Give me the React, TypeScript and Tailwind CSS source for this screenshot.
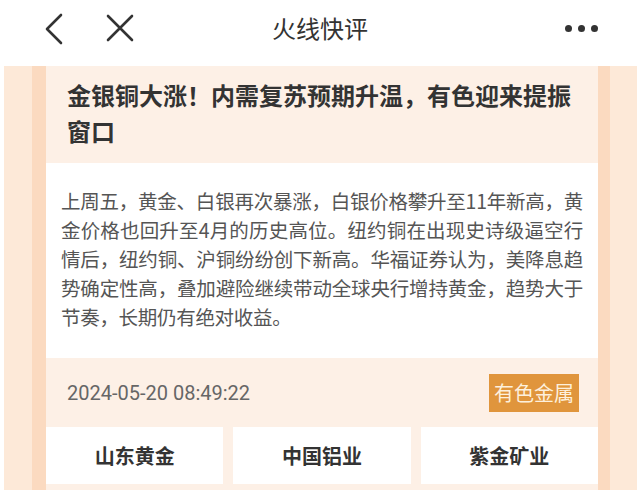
import React from "react";

const cjk = { fontFamily: '"Noto Sans CJK SC", "Noto Sans", sans-serif' };

export default function App() {
  return (
    <div className="w-[640px] h-[490px] bg-white overflow-hidden" style={cjk}>
      {/* Header */}
      <div className="h-[56px] flex items-center justify-between relative">
        <div className="flex items-center pl-[44px] gap-[42px]">
          <svg width="20" height="32" viewBox="0 0 20 32" className="mt-[2px]">
            <path d="M17 2 L3 16 L17 30" fill="none" stroke="#333" strokeWidth="2.6" strokeLinecap="round" strokeLinejoin="round" />
          </svg>
          <svg width="28" height="28" viewBox="0 0 28 28">
            <path d="M2 2 L26 26 M26 2 L2 26" fill="none" stroke="#333" strokeWidth="2.6" strokeLinecap="round" />
          </svg>
        </div>
        <div className="absolute left-0 right-0 top-0 h-[56px] flex items-center justify-center text-[24px] text-[#333] pointer-events-none">
          火线快评
        </div>
        <div className="flex items-center gap-[6px] pr-[42px]">
          <span className="w-[7px] h-[7px] rounded-full bg-[#333]" />
          <span className="w-[7px] h-[7px] rounded-full bg-[#333]" />
          <span className="w-[7px] h-[7px] rounded-full bg-[#333]" />
        </div>
      </div>
      <div className="h-[10px]" />
      {/* Decorative frame */}
      <div className="ml-[4px] mr-[3px] h-[424px] bg-[#fde9d8] pl-[28px] pr-[27px]">
        <div className="h-full bg-[#fbdac0] pl-[14px] pr-[12px]">
          <div className="h-full bg-[#fdf0e6] flex flex-col">
            <div className="pl-[21px] pr-[24px] pt-[11px] pb-[14px] text-[24px] leading-[36px] font-bold text-[#333]">
              金银铜大涨！内需复苏预期升温，有色迎来提振窗口
            </div>
            <div className="bg-white h-[195px] px-[15px] pt-[23px]">
              <p className="text-[19.5px] tracking-[-0.3px] leading-[29px] text-[#555] text-justify">
                上周五，黄金、白银再次暴涨，白银价格攀升至11年新高，黄金价格也回升至4月的历史高位。纽约铜在出现史诗级逼空行情后，纽约铜、沪铜纷纷创下新高。华福证券认为，美降息趋势确定性高，叠加避险继续带动全球央行增持黄金，趋势大于节奏，长期仍有绝对收益。
              </p>
            </div>
            <div className="h-[69px] flex items-center justify-between pl-[21px] pr-[19px]">
              <span className="text-[20px] text-[#666]" style={{ fontFamily: 'Roboto, "Noto Sans", sans-serif' }}>
                2024-05-20 08:49:22
              </span>
              <span className="h-[38px] px-[5px] flex items-center bg-[#e0953c] text-[#fdf0dc] text-[20px]">
                有色金属
              </span>
            </div>
            <div className="grid grid-cols-3 gap-[10px]">
              <div className="h-[57px] bg-white flex items-center justify-center text-[20px] font-bold text-[#333]">山东黄金</div>
              <div className="h-[57px] bg-white flex items-center justify-center text-[20px] font-bold text-[#333]">中国铝业</div>
              <div className="h-[57px] bg-white flex items-center justify-center text-[20px] font-bold text-[#333]">紫金矿业</div>
            </div>
          </div>
        </div>
      </div>
    </div>
  );
}
